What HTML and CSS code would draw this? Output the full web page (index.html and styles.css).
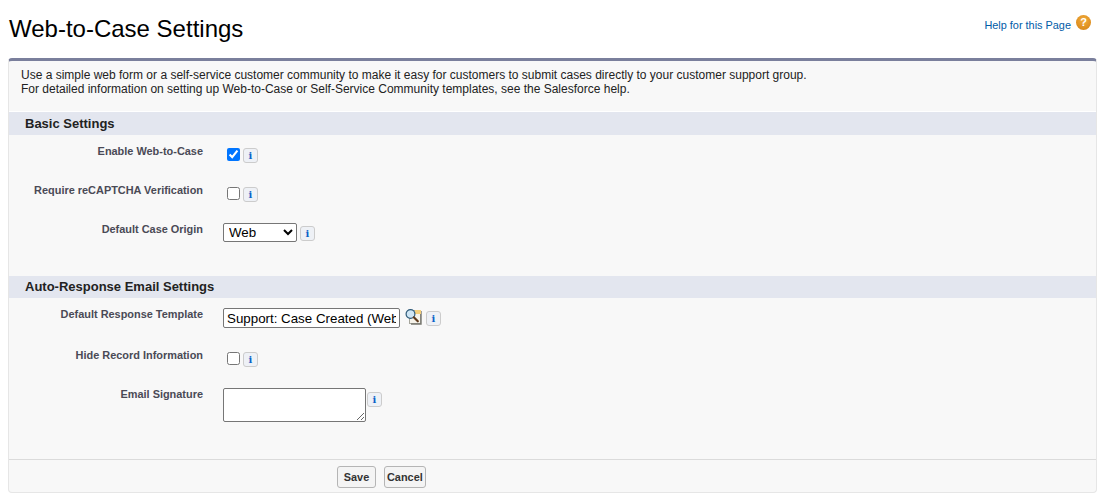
FILE: index.html
```html
<!DOCTYPE html>
<html lang="en">
<head>
  <meta charset="UTF-8">
  <title>Web-to-Case Settings</title>
  <link rel="stylesheet" href="styles.css">
</head>
<body>

  <div class="page-header">
    <h1>Web-to-Case Settings</h1>
    <div class="help">
      <a href="#">Help for this Page</a>
      <span class="help-icon">?</span>
    </div>
  </div>

  <form class="panel">
    <div class="intro">
      Use a simple web form or a self-service customer community to make it easy for customers to submit cases directly to your customer support group.<br>
      For detailed information on setting up Web-to-Case or Self-Service Community templates, see the Salesforce help.
    </div>

    <h2 class="section-title">Basic Settings</h2>
    <div class="section section-basic">
      <div class="row">
        <label class="row-label">Enable Web-to-Case</label>
        <div class="row-field">
          <input type="checkbox" class="check" checked>
          <span class="info">i</span>
        </div>
      </div>
      <div class="row">
        <label class="row-label">Require reCAPTCHA Verification</label>
        <div class="row-field">
          <input type="checkbox" class="check">
          <span class="info">i</span>
        </div>
      </div>
      <div class="row">
        <label class="row-label">Default Case Origin</label>
        <div class="row-field">
          <select class="origin"><option>Web</option></select>
          <span class="info">i</span>
        </div>
      </div>
    </div>

    <h2 class="section-title section-title-email">Auto-Response Email Settings</h2>
    <div class="section section-email">
      <div class="row row-template">
        <label class="row-label">Default Response Template</label>
        <div class="row-field">
          <input type="text" class="template" value="Support: Case Created (Web)">
          <svg class="lookup" width="17" height="16" viewBox="0 0 17 16">
            <rect x="4.5" y="1.5" width="11" height="13" fill="#f6f3ea" stroke="#a5a59c"/>
            <path d="M16 2v13H6" fill="none" stroke="#77776f" stroke-width="1.4"/>
            <rect x="10" y="1" width="6" height="4" fill="#f5cf7a"/>
            <circle cx="5.5" cy="5" r="4.4" fill="#cfe6f5" stroke="#2f5a78" stroke-width="1.2"/>
            <path d="M8.8 8.3L12.8 12.3" stroke="#5f3a1c" stroke-width="2.2" stroke-linecap="round"/>
          </svg>
          <span class="info">i</span>
        </div>
      </div>
      <div class="row">
        <label class="row-label">Hide Record Information</label>
        <div class="row-field">
          <input type="checkbox" class="check">
          <span class="info">i</span>
        </div>
      </div>
      <div class="row">
        <label class="row-label">Email Signature</label>
        <div class="row-field">
          <textarea class="signature"></textarea>
          <span class="info info-signature">i</span>
        </div>
      </div>
    </div>

    <div class="buttons">
      <button type="button">Save</button>
      <button type="button">Cancel</button>
    </div>
  </form>

</body>
</html>
```

FILE: styles.css
```css
body {
  margin: 0;
  padding: 0 5px 0 8px;
  font-family: Arial, "Liberation Sans", sans-serif;
  background-color: #fff;
  color: #000;
}
.page-header {
  display: flex;
  justify-content: space-between;
  height: 58px;
  padding-left: 1px;
}
h1 {
  margin: 15px 0 0;
  font-size: 24px;
  line-height: 28px;
  font-weight: normal;
}
.help {
  display: flex;
  align-items: flex-start;
  gap: 5px;
  margin-top: 15px;
  padding-right: 6px;
  font-size: 10.9px;
}
.help a {
  margin-top: 4px;
  color: #015ba7;
  text-decoration: none;
}
.help-icon {
  width: 15px;
  height: 15px;
  border-radius: 50%;
  background: radial-gradient(circle at 50% 35%, #f3ad3c, #d27f12);
  color: #fff;
  font-size: 11px;
  font-weight: bold;
  line-height: 15px;
  text-align: center;
}
.panel {
  height: 435px;
  box-sizing: border-box;
  border: 1px solid #e6e6e6;
  border-top: 3px solid #7a7f9c;
  border-radius: 4px;
  background-color: #f8f8f8;
}
.intro {
  height: 51px;
  box-sizing: border-box;
  padding: 7px 12px 0;
  font-size: 12px;
  line-height: 14px;
  color: #222;
  border-bottom: 1px solid #fff;
}
.section-title {
  margin: 0;
  height: 23px;
  padding-left: 16px;
  background-color: #e3e6ef;
  font-size: 13px;
  line-height: 24px;
  font-weight: bold;
  color: #222;
}
.section-title-email {
  height: 22px;
  line-height: 22px;
}
.section-basic {
  height: 141px;
}
.section-email {
  height: 161px;
}
.row {
  display: flex;
  gap: 20px;
  height: 39px;
}
.row-template {
  height: 41px;
}
.row-label {
  width: 194px;
  flex-shrink: 0;
  padding-top: 9px;
  font-size: 10.93px;
  line-height: 14px;
  font-weight: bold;
  color: #4a4a56;
  text-align: right;
}
.row-field {
  display: flex;
  align-items: flex-start;
  gap: 3px;
  padding-top: 10px;
}
.check {
  width: 13px;
  height: 13px;
  margin: 3px 0 0 4px;
  accent-color: #0075ff;
}
.origin {
  width: 74px;
  height: 19px;
  padding-left: 1px;
  font-family: Arial, "Liberation Sans", sans-serif;
  font-size: 13.33px;
  background-color: #fff;
  border: 1px solid #767676;
  border-radius: 2px;
}
.template {
  width: 177px;
  height: 20px;
  margin-top: 0;
  margin-right: 2px;
  box-sizing: border-box;
  padding: 1px 3px;
  font-family: Arial, "Liberation Sans", sans-serif;
  font-size: 13.33px;
  border: 1px solid #767676;
  border-radius: 2px;
}
.lookup {
  margin-top: 1px;
  margin-right: 1px;
}
.signature {
  width: 143px;
  height: 34px;
  box-sizing: border-box;
  margin: 0;
  border: 1px solid #767676;
  border-radius: 2px;
}
.info {
  width: 13px;
  height: 13px;
  margin-top: 3px;
  border: 1px solid #ccc;
  border-radius: 3px;
  background-color: #eef1f6;
  color: #0a62c9;
  font-family: "DejaVu Serif", "Liberation Serif", serif;
  font-size: 10px;
  font-weight: bold;
  line-height: 13px;
  text-align: center;
}
.info-signature {
  margin-top: 4px;
  margin-left: -2px;
}
.buttons {
  display: flex;
  gap: 8px;
  height: 33px;
  box-sizing: border-box;
  padding: 6px 0 0 328px;
  border-top: 1px solid #dbdbdb;
}
.buttons button {
  height: 22px;
  min-width: 39px;
  padding: 0 2px;
  font-family: Arial, "Liberation Sans", sans-serif;
  font-size: 10.9px;
  font-weight: bold;
  color: #333;
  background-color: #f4f4f4;
  border: 1px solid #b5b5b5;
  border-radius: 3px;
}
```
